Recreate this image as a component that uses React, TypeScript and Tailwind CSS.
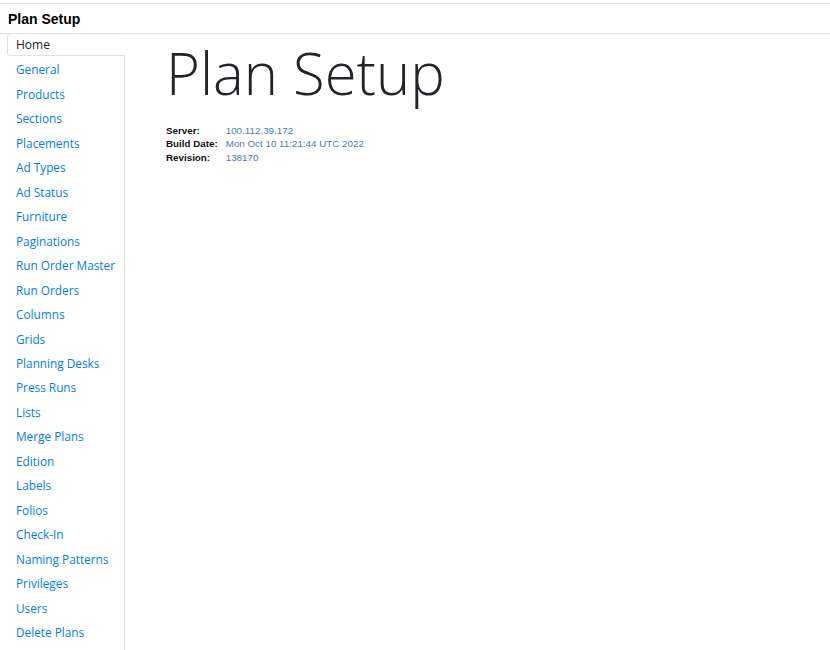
const NAV_ITEMS = [
  "General",
  "Products",
  "Sections",
  "Placements",
  "Ad Types",
  "Ad Status",
  "Furniture",
  "Paginations",
  "Run Order Master",
  "Run Orders",
  "Columns",
  "Grids",
  "Planning Desks",
  "Press Runs",
  "Lists",
  "Merge Plans",
  "Edition",
  "Labels",
  "Folios",
  "Check-In",
  "Naming Patterns",
  "Privileges",
  "Users",
  "Delete Plans",
];

const INFO = [
  { label: "Server:", value: "100.112.39.172" },
  { label: "Build Date:", value: "Mon Oct 10 11:21:44 UTC 2022" },
  { label: "Revision:", value: "138170" },
];

export default function App() {
  return (
    <div className="h-[650px] overflow-hidden bg-white">
      <header className="mt-[3px] flex h-[31px] items-center border-y border-[#dedede] pl-[8px] pt-[2px] font-['Liberation_Sans',Arial,sans-serif] text-[14px] font-bold text-black">
        Plan Setup
      </header>

      <div className="flex">
        <nav className="flex w-[125px] shrink-0 flex-col pl-[7px] font-['Open_Sans',sans-serif] text-[11.8px]">
          <div className="-mt-px flex h-[23px] items-center rounded-l-[4px] border border-r-0 border-[#dee2e6] pl-[8px] text-[12px] text-[#212529]">
            Home
          </div>
          <ul className="flex flex-col border-r border-[#dee2e6] pt-[2px] pb-[20px]">
            {NAV_ITEMS.map((item) => (
              <li key={item} className="flex h-[24.48px] items-center pl-[9px] text-[#007bff]">
                {item}
              </li>
            ))}
          </ul>
        </nav>

        <main className="pl-[41px] pt-[4px]">
          <h1 className="font-['Open_Sans',sans-serif] text-[58px] font-light leading-[1.2] text-[#212529]">Plan Setup</h1>
          <table className="mt-[16px] font-['Liberation_Sans',Arial,sans-serif] text-[9.8px] leading-[13.5px]">
            <tbody>
              {INFO.map((row) => (
                <tr key={row.label}>
                  <td className="pr-[8px] font-bold text-[#111]">{row.label}</td>
                  <td className="text-[#4a7bc4]">{row.value}</td>
                </tr>
              ))}
            </tbody>
          </table>
        </main>
      </div>
    </div>
  );
}
